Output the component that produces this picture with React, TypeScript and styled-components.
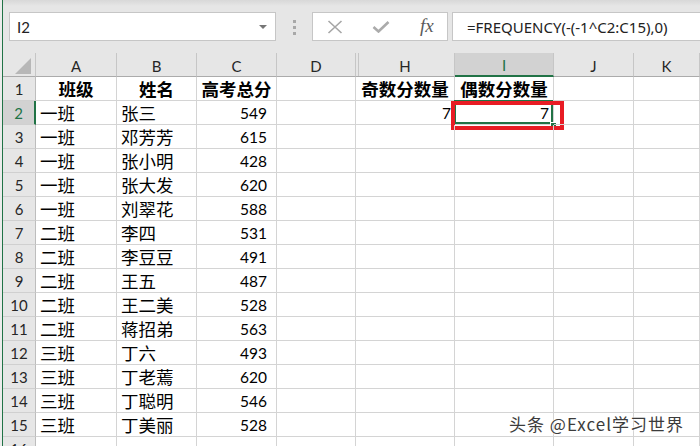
import React from "react";
import styled, { createGlobalStyle } from "styled-components";

const GREEN = "#217346";
const HEAD_BG = "#e6e6e6";
const SEL_BG = "#d2d2d2";
const GRID = "#d4d4d4";

const Global = createGlobalStyle`
  html, body { margin: 0; padding: 0; background: #fff; }
  body { width: 700px; height: 446px; overflow: hidden; }
`;

const Window = styled.div`
  position: relative;
  width: 700px;
  height: 446px;
  overflow: hidden;
  display: flex;
  background: #fff;
`;

const EdgeStrip = styled.div`
  flex: none;
  width: 2px;
  background: #ececec;
  border-right: 1px solid ${GREEN};
`;

const Main = styled.div`
  flex: 1;
  min-width: 0;
  display: flex;
  flex-direction: column;
`;

const FormulaBar = styled.div`
  flex: none;
  height: 53px;
  box-sizing: border-box;
  padding: 12px 0 0 6px;
  display: flex;
  align-items: flex-start;
  background: linear-gradient(#d8d8d8 0, #e6e6e6 6px);
`;

const NameBox = styled.div`
  box-sizing: border-box;
  flex: none;
  width: 267px;
  height: 29px;
  background: #fff;
  border: 1px solid #c6c6c6;
  display: flex;
  align-items: center;
  justify-content: space-between;
  padding: 0 8px 0 7px;
  font: 15px "Lato", "Noto Sans", sans-serif;
  color: #222;
`;

const Arrow = styled.span`
  width: 0;
  height: 0;
  border-left: 4px solid transparent;
  border-right: 4px solid transparent;
  border-top: 4px solid #767676;
`;

const Grip = styled.div`
  flex: none;
  margin: 8px 16px 0 17px;
  display: flex;
  flex-direction: column;
  gap: 3px;
`;

const GripDot = styled.span`
  width: 3px;
  height: 3px;
  background: #a8a8a8;
`;

const FxBox = styled.div`
  box-sizing: border-box;
  flex: none;
  width: 136px;
  height: 29px;
  background: #fff;
  border: 1px solid #c6c6c6;
  display: flex;
  align-items: center;
  padding-left: 14px;
  gap: 29px;
`;

const FxLabel = styled.span`
  font: italic 19px "Liberation Serif", serif;
  color: #5a5a5a;
  line-height: 1;
  margin-left: 1px;
  margin-top: -2px;
`;

const FormulaInput = styled.div`
  box-sizing: border-box;
  flex: 1;
  height: 29px;
  margin-left: 4px;
  background: #fff;
  border: 1px solid #c6c6c6;
  border-right: none;
  display: flex;
  align-items: center;
  padding-left: 14px;
  font: 15px "Noto Sans", "Open Sans", sans-serif;
  color: #222;
  white-space: nowrap;
`;

const Sheet = styled.div`
  display: grid;
  grid-template-columns: 33px 81px 80px 80px 79px 99px 99px 80px 1fr;
  grid-auto-rows: 24px;
`;

const ColHead = styled.div<{ $selected?: boolean; $gap?: boolean }>`
  box-sizing: border-box;
  display: flex;
  align-items: center;
  justify-content: center;
  padding-top: 2px;
  background: ${(p) => (p.$selected ? SEL_BG : HEAD_BG)};
  border-right: 1px solid #c6c6c6;
  border-bottom: ${(p) => (p.$selected ? `2px solid ${GREEN}` : "1px solid #ababab")};
  box-shadow: ${(p) => (p.$gap ? `inset 2px 0 0 ${HEAD_BG}, inset 3px 0 0 #c6c6c6` : "none")};
  font: 15px "Lato", "Noto Sans", sans-serif;
  color: ${(p) => (p.$selected ? GREEN : "#262626")};
`;

const Corner = styled.div`
  box-sizing: border-box;
  display: flex;
  align-items: flex-end;
  justify-content: flex-end;
  padding: 0 4px 2px 0;
  background: ${HEAD_BG};
  border-right: 1px solid #c6c6c6;
  border-bottom: 1px solid #ababab;
`;

const RowHead = styled.div<{ $selected?: boolean }>`
  box-sizing: border-box;
  display: flex;
  align-items: center;
  justify-content: center;
  padding-top: 1px;
  background: ${(p) => (p.$selected ? SEL_BG : HEAD_BG)};
  border-right: ${(p) => (p.$selected ? `2px solid ${GREEN}` : "1px solid #bdbdbd")};
  border-bottom: 1px solid #d0d0d0;
  font: 15px "Lato", "Noto Sans", sans-serif;
  color: ${(p) => (p.$selected ? GREEN : "#262626")};
`;

type Align = "left" | "center" | "right";

const Cell = styled.div<{ $align?: Align; $bold?: boolean; $num?: boolean; $pr?: number }>`
  position: relative;
  box-sizing: border-box;
  display: flex;
  align-items: center;
  justify-content: ${(p) =>
    p.$align === "right" ? "flex-end" : p.$align === "center" ? "center" : "flex-start"};
  padding: ${(p) => (p.$num ? "1px" : "0")} ${(p) => p.$pr ?? 4}px 0 4px;
  border-right: 1px solid ${GRID};
  border-bottom: 1px solid ${GRID};
  white-space: nowrap;
  font-family: ${(p) =>
    p.$num ? `"Lato", "Noto Sans", sans-serif` : `"Noto Sans CJK SC", "Noto Sans", sans-serif`};
  font-size: ${(p) => (p.$num ? "15.5px" : "17.5px")};
  font-weight: ${(p) => (p.$bold ? 700 : 400)};
  color: #000;
`;

const ActiveFrame = styled.div`
  position: absolute;
  left: -1px;
  top: -1px;
  right: 0;
  bottom: 0;
  border: 2px solid ${GREEN};
  pointer-events: none;
`;

const FillHandle = styled.div`
  position: absolute;
  right: -4px;
  bottom: -5px;
  width: 5px;
  height: 5px;
  background: ${GREEN};
  border: 1px solid #fff;
`;

const Callout = styled.div`
  position: absolute;
  left: -4px;
  top: 0;
  width: 113px;
  height: 29px;
  box-sizing: border-box;
  border: 4px solid #e81c24;
  pointer-events: none;
`;

const Watermark = styled.div`
  position: absolute;
  left: 509px;
  top: 411px;
  font: 17px "Noto Sans CJK SC", "Noto Sans", sans-serif;
  color: #3c3c3c;
  white-space: nowrap;
  text-shadow: 0 0 2px #fff, 0 0 2px #fff;
  letter-spacing: 1px;
`;

const XIcon = () => (
  <svg width="16" height="14" viewBox="0 0 16 14">
    <path d="M1.5 1 L14.5 13 M14.5 1 L1.5 13" stroke="#a6a6a6" strokeWidth="1.6" fill="none" />
  </svg>
);

const CheckIcon = () => (
  <svg width="18" height="12" viewBox="0 0 18 12">
    <path d="M1.5 6 L6.5 10.5 L16.5 1" stroke="#ababab" strokeWidth="2.6" fill="none" />
  </svg>
);

const SelectAll = () => (
  <svg width="16" height="16" viewBox="0 0 16 16">
    <polygon points="16,0 16,16 0,16" fill="#b7b7b7" />
  </svg>
);

const columns = ["A", "B", "C", "D", "H", "I", "J", "K"];

const data: [string, string, number][] = [
  ["一班", "张三", 549],
  ["一班", "邓芳芳", 615],
  ["一班", "张小明", 428],
  ["一班", "张大发", 620],
  ["一班", "刘翠花", 588],
  ["二班", "李四", 531],
  ["二班", "李豆豆", 491],
  ["二班", "王五", 487],
  ["二班", "王二美", 528],
  ["二班", "蒋招弟", 563],
  ["三班", "丁六", 493],
  ["三班", "丁老蔫", 620],
  ["三班", "丁聪明", 546],
  ["三班", "丁美丽", 528],
];

export default function App() {
  return (
    <>
      <Global />
      <Window>
        <EdgeStrip />
        <Main>
          <FormulaBar>
            <NameBox>
              <span>I2</span>
              <Arrow />
            </NameBox>
            <Grip>
              <GripDot />
              <GripDot />
              <GripDot />
            </Grip>
            <FxBox>
              <XIcon />
              <CheckIcon />
              <FxLabel>fx</FxLabel>
            </FxBox>
            <FormulaInput>=FREQUENCY(-(-1^C2:C15),0)</FormulaInput>
          </FormulaBar>
          <Sheet>
            <Corner>
              <SelectAll />
            </Corner>
            {columns.map((c) => (
              <ColHead key={c} $selected={c === "I"} $gap={c === "H"}>
                {c}
              </ColHead>
            ))}

            <RowHead>1</RowHead>
            <Cell $align="center" $bold>班级</Cell>
            <Cell $align="center" $bold>姓名</Cell>
            <Cell $align="center" $bold>高考总分</Cell>
            <Cell />
            <Cell $align="center" $bold>奇数分数量</Cell>
            <Cell $align="center" $bold>偶数分数量</Cell>
            <Cell />
            <Cell />

            {data.map(([cls, name, score], i) => {
              const row = i + 2;
              return (
                <React.Fragment key={row}>
                  <RowHead $selected={row === 2}>{row}</RowHead>
                  <Cell>{cls}</Cell>
                  <Cell>{name}</Cell>
                  <Cell $align="right" $num $pr={9}>{score}</Cell>
                  <Cell />
                  {row === 2 ? (
                    <>
                      <Cell $align="right" $num $pr={3}>7</Cell>
                      <Cell $align="right" $num $pr={4}>
                        7
                        <ActiveFrame />
                        <FillHandle />
                        <Callout />
                      </Cell>
                    </>
                  ) : (
                    <>
                      <Cell />
                      <Cell />
                    </>
                  )}
                  <Cell />
                  <Cell />
                </React.Fragment>
              );
            })}

            <RowHead>16</RowHead>
            <Cell />
            <Cell />
            <Cell />
            <Cell />
            <Cell />
            <Cell />
            <Cell />
            <Cell />
          </Sheet>
        </Main>
        <Watermark>头条 @Excel学习世界</Watermark>
      </Window>
    </>
  );
}
